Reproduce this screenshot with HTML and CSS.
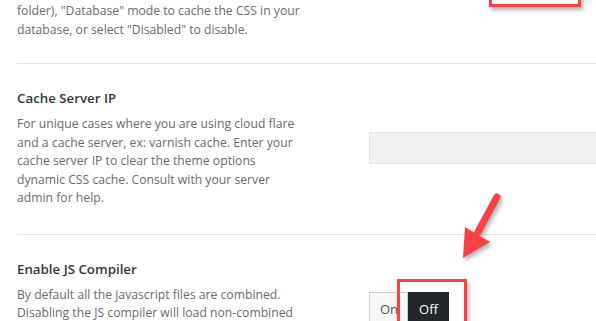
FILE: index.html
```html
<!DOCTYPE html>
<html lang="en">
<head>
  <meta charset="UTF-8" />
  <title>Theme Options - Performance</title>
  <link rel="stylesheet" href="styles.css">
</head>
<body>
  <div class="settings">
    <div class="row row-first">
      <div class="info">
        <p class="desc">folder), "Database" mode to cache the CSS in your database, or select "Disabled" to disable.</p>
      </div>
      <div class="control"></div>
    </div>

    <div class="row">
      <div class="info">
        <h3 class="title">Cache Server IP</h3>
        <p class="desc">For unique cases where you are using cloud flare and a cache server, ex: varnish cache. Enter your cache server IP to clear the theme options dynamic CSS cache. Consult with your server admin for help.</p>
      </div>
      <div class="control">
        <input type="text" class="text-field">
      </div>
    </div>

    <div class="row">
      <div class="info">
        <h3 class="title">Enable JS Compiler</h3>
        <p class="desc">By default all the javascript files are combined. Disabling the JS compiler will load non-combined javascript files. Turn this off if you run into conflicts with a plugin.</p>
      </div>
      <div class="control">
        <div class="button-set">
          <span class="set-btn">On</span>
          <span class="set-btn active">Off</span>
        </div>
      </div>
    </div>
  </div>

  <!-- screenshot annotations -->
  <div class="mark mark-top"></div>
  <div class="mark mark-toggle"></div>
  <svg class="arrow" width="80" height="90" viewBox="0 0 80 90">
    <line x1="57" y1="17" x2="38" y2="52" stroke="#fb4146" stroke-width="7" stroke-linecap="round"/>
    <polygon points="25,47 50,62 23,78" fill="#fb4146"/>
  </svg>
</body>
</html>
```

FILE: styles.css
```css
body {
  margin: 0;
  background: #fff;
  font-family: 'Open Sans', sans-serif;
  overflow: hidden;
}

.settings {
  margin-left: 17px;
  overflow: hidden;
}

.row {
  display: grid;
  grid-template-columns: 352px 1fr;
  align-items: center;
  padding: 24px 0 26px;
  border-bottom: 1px solid #e5e5e5;
}

.row-first {
  padding-top: 1px;
  padding-bottom: 24px;
}

.title {
  margin: 0 0 7px;
  font-size: 13.3px;
  line-height: 20px;
  font-weight: 600;
  color: #32373c;
}

.desc {
  margin: 0;
  width: 285px;
  font-size: 12.2px;
  line-height: 18.5px;
  color: #6b6b6b;
}

.row-first .desc {
  line-height: 19px;
}

.text-field {
  display: block;
  width: 260px;
  height: 32px;
  box-sizing: border-box;
  border: 1px solid #e3e3e3;
  background: #f2f1f0;
}

.button-set {
  display: flex;
}

.set-btn {
  padding: 6px 9px 6px 10px;
  font-size: 13px;
  line-height: 20px;
  border: 1px solid #cfcfcf;
  background: #f7f7f7;
  color: #555;
}

.set-btn.active {
  border-color: #23282d;
  background: #23282d;
  color: #fff;
  padding: 6px 10px;
}

.mark {
  position: absolute;
  border: 3px solid #fb4146;
  box-shadow: 2px 3px 4px rgba(0,0,0,0.3);
}

.mark-top {
  left: 489px;
  top: -40px;
  width: 86px;
  height: 41px;
}

.mark-toggle {
  left: 397px;
  top: 279px;
  width: 64px;
  height: 60px;
}

.arrow {
  position: absolute;
  left: 440px;
  top: 180px;
  filter: drop-shadow(2px 3px 2px rgba(0,0,0,0.3));
}
```
